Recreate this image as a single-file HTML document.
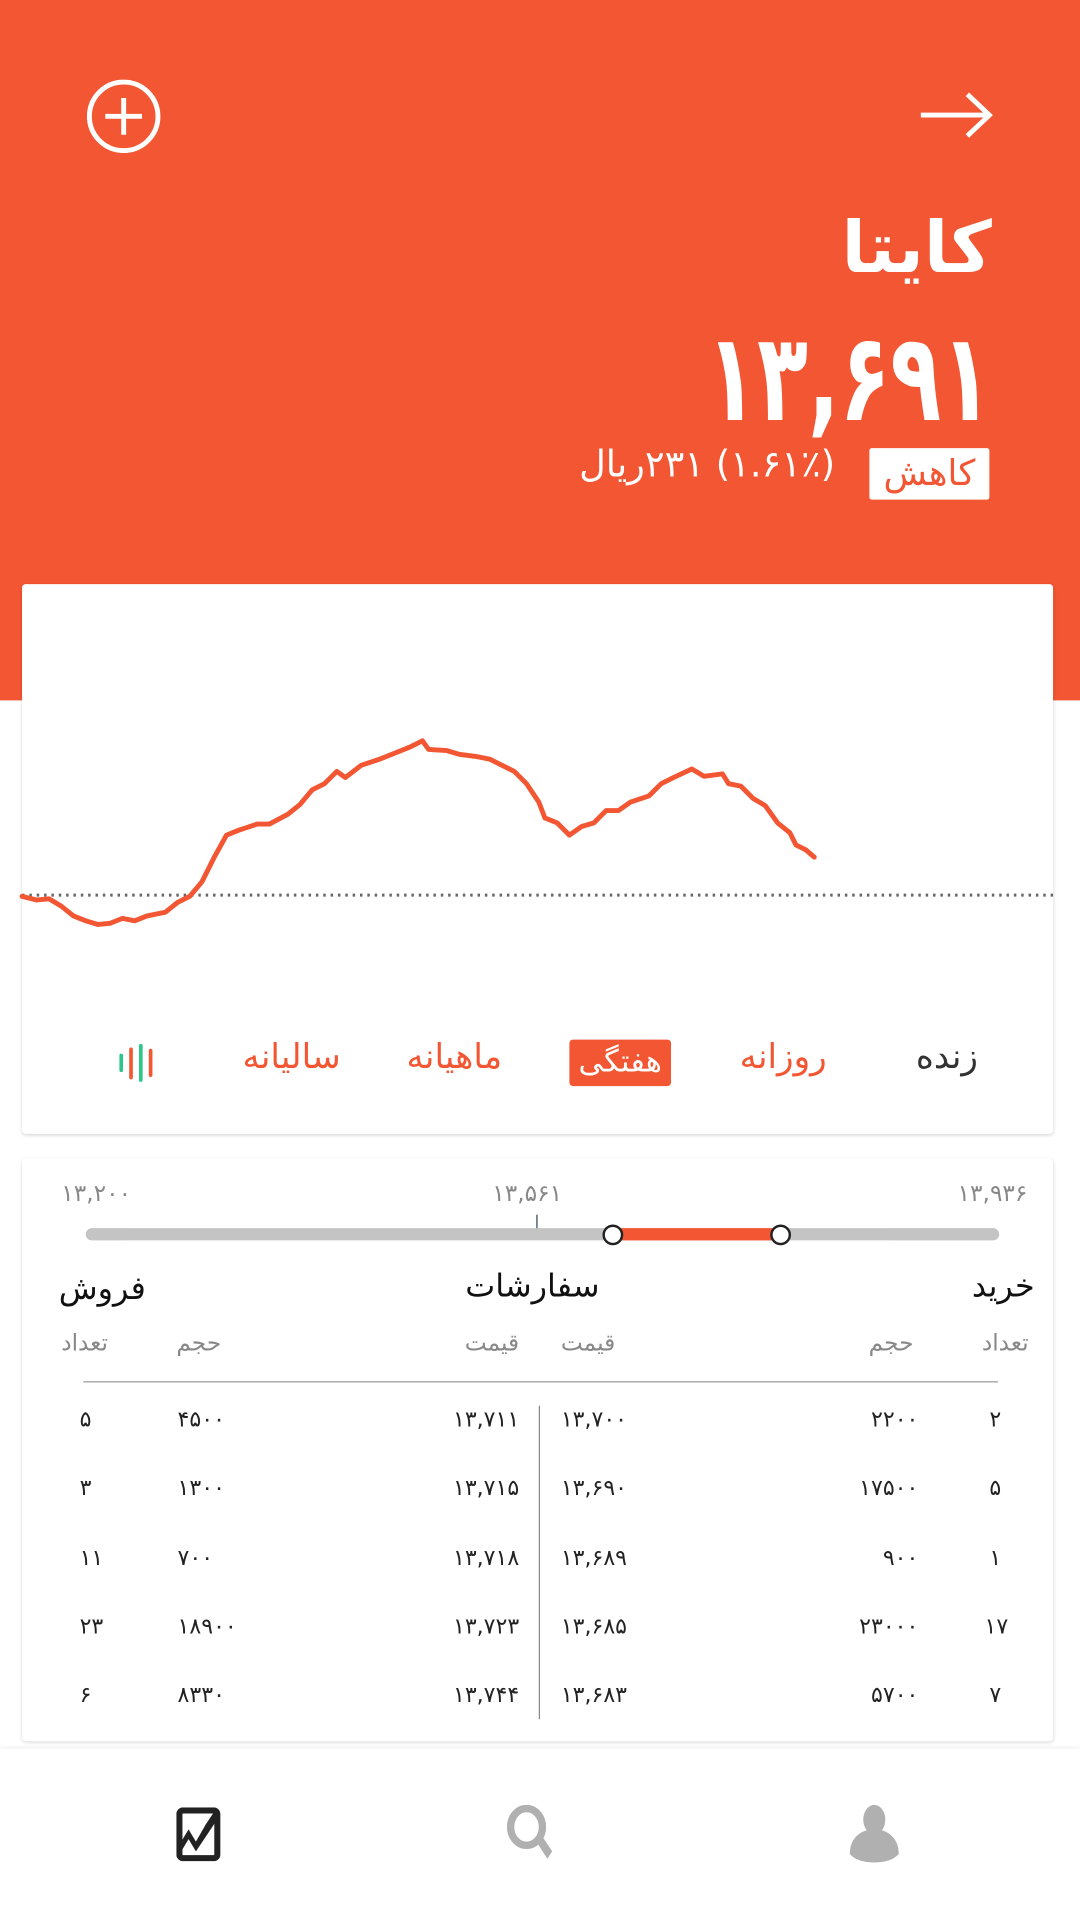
<!DOCTYPE html>
<html><head><meta charset="utf-8">
<style>
html,body{margin:0;padding:0;width:1080px;height:1920px;overflow:hidden;background:#f2f2f2}
#w{width:882px;height:1568px;transform:scale(1.22449);transform-origin:0 0;position:relative;font-family:"DejaVu Sans",sans-serif;background:#fff}
.a{position:absolute;white-space:nowrap}
.hdr{position:absolute;left:0;top:0;width:882px;height:572px;background:#f35632}
.card{position:absolute;background:#fff;border-radius:3px;box-shadow:0 1px 3px rgba(0,0,0,.15)}
.r{direction:rtl}
.ob{font-size:18px;color:#222}
</style></head><body><div id="w">
<div class="hdr"></div>
<svg class="a" style="left:70px;top:64px" width="62" height="62" viewBox="0 0 62 62"><circle cx="31" cy="31" r="28" fill="none" stroke="#fff" stroke-width="4"/><path d="M31 16v30M16 31h30" stroke="#fff" stroke-width="4"/></svg>
<svg class="a" style="left:750px;top:74px" width="62" height="40" viewBox="0 0 62 40"><path d="M2 20h56M40 3l18 17-18 17" fill="none" stroke="#fff" stroke-width="4"/></svg>
<div class="a r" style="right:72px;top:168px;font-size:58px;color:#fff;font-weight:bold">کایتا</div>
<div class="a" style="right:72px;top:250px;font-size:100px;color:#fff;font-weight:bold;letter-spacing:-2px;transform:scaleX(0.68);transform-origin:right center">۱۳,۶۹۱</div>
<div class="a" style="left:710px;top:366px;width:98px;height:42px;background:#fff;border-radius:2px;color:#f35632;font-size:29px;text-align:center;line-height:40px">کاهش</div>
<div class="a r" style="right:200px;top:362px;font-size:30px;color:#fff">(۱.۶۱٪) ۲۳۱ریال</div>

<div class="card" style="left:18px;top:477px;width:842px;height:449px"></div>
<svg class="a" style="left:0;top:0" width="882" height="930">
<line x1="18" y1="731" x2="860" y2="731" stroke="#666" stroke-width="2.5" stroke-dasharray="2 4"/>
<polyline fill="none" stroke="#f35632" stroke-width="4" stroke-linejoin="round" stroke-linecap="round" points="18,732 30,735 40,734 50,740 60,748 70,752 80,755 90,754 100,750 110,752 120,748 135,745 145,737 155,732 165,720 175,700 185,682 195,678 210,673 220,673 235,665 245,657 255,645 265,640 275,630 282,635 295,625 310,620 325,614 335,610 345,605 350,612 365,613 375,616 390,618 400,620 410,625 420,630 430,640 440,655 445,668 455,672 465,682 475,675 485,672 495,662 505,662 515,655 530,650 540,640 550,635 565,628 575,634 590,632 595,640 605,642 615,652 625,658 635,672 645,680 650,690 658,694 665,700"/>
</svg>
<div class="a" style="left:748px;top:846px;font-size:28px;color:#333">زنده</div>
<div class="a" style="left:604px;top:846px;font-size:28px;color:#f35632">روزانه</div>
<div class="a" style="left:465px;top:849px;width:83px;height:38px;background:#f35632;border-radius:3px;color:#fff;font-size:25px;text-align:center;line-height:36px">هفتگی</div>
<div class="a" style="left:332px;top:846px;font-size:28px;color:#f35632">ماهیانه</div>
<div class="a" style="left:198px;top:846px;font-size:28px;color:#f35632">سالیانه</div>
<svg class="a" style="left:96px;top:852px" width="36" height="32"><g stroke-width="3" stroke-linecap="round"><line x1="3" y1="10" x2="3" y2="22" stroke="#2dc68a"/><line x1="11" y1="5" x2="11" y2="28" stroke="#f35632"/><line x1="19" y1="2" x2="19" y2="30" stroke="#2dc68a"/><line x1="27" y1="6" x2="27" y2="26" stroke="#f35632"/></g></svg>

<div class="card" style="left:18px;top:946px;width:842px;height:476px"></div>
<div class="a" style="left:50px;top:964px;font-size:19px;color:#888">۱۳,۲۰۰</div>
<div class="a" style="left:402px;top:964px;font-size:19px;color:#888">۱۳,۵۶۱</div>
<div class="a" style="left:782px;top:964px;font-size:19px;color:#888">۱۳,۹۳۶</div>
<div class="a" style="left:70px;top:1003px;width:746px;height:10px;background:#c4c4c4;border-radius:5px"></div>
<div class="a" style="left:500px;top:1003px;width:137px;height:10px;background:#f35632"></div>
<div class="a" style="left:438px;top:992px;width:1px;height:11px;background:#345"></div>
<div class="a" style="left:492px;top:1000px;width:13px;height:13px;border:2px solid #222;border-radius:50%;background:#fff"></div>
<div class="a" style="left:629px;top:1000px;width:13px;height:13px;border:2px solid #222;border-radius:50%;background:#fff"></div>
<div class="a" style="right:37px;top:1036px;font-size:26px;color:#111">خرید</div>
<div class="a" style="left:380px;top:1036px;font-size:26px;color:#111">سفارشات</div>
<div class="a" style="left:48px;top:1038px;font-size:26px;color:#111">فروش</div>
<div class="a" style="right:42px;top:1086px;font-size:19px;color:#888">تعداد</div>
<div class="a" style="right:136px;top:1086px;font-size:19px;color:#888">حجم</div>
<div class="a" style="left:458px;top:1086px;font-size:19px;color:#888">قیمت</div>
<div class="a" style="right:458px;top:1086px;font-size:19px;color:#888">قیمت</div>
<div class="a" style="left:144px;top:1086px;font-size:19px;color:#888">حجم</div>
<div class="a" style="left:50px;top:1086px;font-size:19px;color:#888">تعداد</div>
<div class="a" style="left:68px;top:1128px;width:747px;height:1px;background:#999"></div>
<div class="a" style="left:440px;top:1148px;width:1px;height:256px;background:#888"></div>
<div class="ob">
<div class="a" style="left:808px;top:1149px">۲</div><div class="a" style="right:132px;top:1149px">۲۲۰۰</div><div class="a" style="left:458px;top:1149px">۱۳,۷۰۰</div><div class="a" style="right:458px;top:1149px">۱۳,۷۱۱</div><div class="a" style="left:145px;top:1149px">۴۵۰۰</div><div class="a" style="left:65px;top:1149px">۵</div>
<div class="a" style="left:808px;top:1205px">۵</div><div class="a" style="right:132px;top:1205px">۱۷۵۰۰</div><div class="a" style="left:458px;top:1205px">۱۳,۶۹۰</div><div class="a" style="right:458px;top:1205px">۱۳,۷۱۵</div><div class="a" style="left:145px;top:1205px">۱۳۰۰</div><div class="a" style="left:65px;top:1205px">۳</div>
<div class="a" style="left:808px;top:1262px">۱</div><div class="a" style="right:132px;top:1262px">۹۰۰</div><div class="a" style="left:458px;top:1262px">۱۳,۶۸۹</div><div class="a" style="right:458px;top:1262px">۱۳,۷۱۸</div><div class="a" style="left:145px;top:1262px">۷۰۰</div><div class="a" style="left:65px;top:1262px">۱۱</div>
<div class="a" style="left:804px;top:1318px">۱۷</div><div class="a" style="right:132px;top:1318px">۲۳۰۰۰</div><div class="a" style="left:458px;top:1318px">۱۳,۶۸۵</div><div class="a" style="right:458px;top:1318px">۱۳,۷۲۳</div><div class="a" style="left:145px;top:1318px">۱۸۹۰۰</div><div class="a" style="left:65px;top:1318px">۲۳</div>
<div class="a" style="left:808px;top:1374px">۷</div><div class="a" style="right:132px;top:1374px">۵۷۰۰</div><div class="a" style="left:458px;top:1374px">۱۳,۶۸۳</div><div class="a" style="right:458px;top:1374px">۱۳,۷۴۴</div><div class="a" style="left:145px;top:1374px">۸۳۳۰</div><div class="a" style="left:65px;top:1374px">۶</div>
</div>
<div class="a" style="left:0;top:1428px;width:882px;height:140px;background:#fff;box-shadow:0 -1px 3px rgba(0,0,0,.08)"></div>
<svg class="a" style="left:144px;top:1476px" width="36" height="44" viewBox="0 0 36 44"><rect x="2.5" y="2.5" width="31" height="39" rx="3" fill="none" stroke="#222" stroke-width="5"/><path d="M4 28l6-10 6 10 8-14 8-12v10l-8 12-8 12-6-10-6 10z" fill="#222"/></svg>
<svg class="a" style="left:414px;top:1474px" width="48" height="46" viewBox="0 0 48 46"><ellipse cx="16" cy="18" rx="13" ry="15" fill="none" stroke="#b0b0b0" stroke-width="6"/><path d="M24 30l9 14 4-6-8-12z" fill="#b0b0b0"/></svg>
<svg class="a" style="left:692px;top:1474px" width="44" height="48" viewBox="0 0 44 48"><ellipse cx="22" cy="12" rx="9" ry="12" fill="#b0b0b0"/><path d="M2 40c0-12 8-20 20-20s20 8 20 20c-4 5-12 7-20 7S6 45 2 40z" fill="#b0b0b0"/></svg>
</div></body></html>
